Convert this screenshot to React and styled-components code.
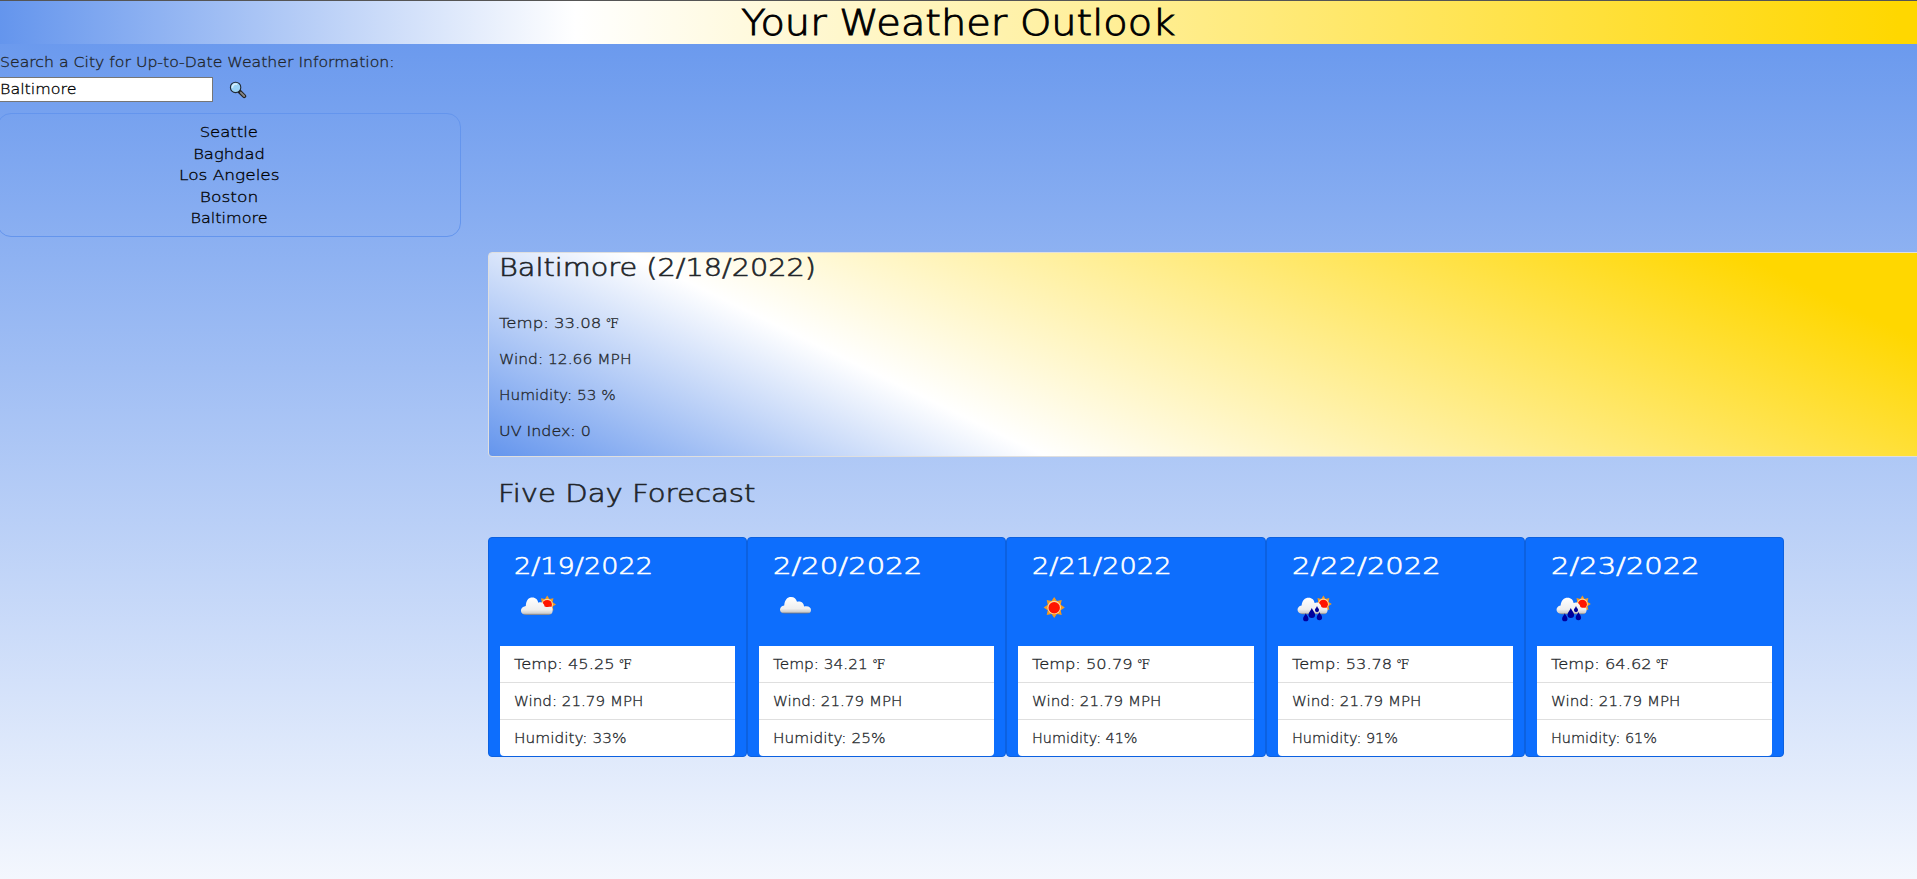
import React from "react";
import styled, { createGlobalStyle } from "styled-components";

const GlobalStyle = createGlobalStyle`
  *, *::before, *::after { box-sizing: border-box; }
  html, body { margin: 0; height: 879px; overflow: hidden; }
  body {
    background: linear-gradient(to bottom, cornflowerblue, white 950px);
    color: #212529;
    font-family: "DejaVu Sans Light", "DejaVu Sans", sans-serif;
    font-weight: 200;
    font-size: 14.6px;
    line-height: 24px;
  }
`;

const Label = styled.span`
  display: inline-block;
  white-space: pre;
  transform: scaleX(${(p) => p.$stretch || 1});
  transform-origin: ${(p) => (p.$centered ? "center" : "left")};
  -webkit-text-stroke: ${(p) => p.$stroke ?? 0.3}px currentColor;
`;

const Degree = styled.span`
  font-family: "DejaVu Serif Condensed", "DejaVu Serif", serif;
  font-weight: 400;
  font-size: 13px;
  line-height: 1;
  margin-left: ${(p) => p.$gap}px;
`;

const Page = styled.div`
  width: 100%;
  height: 879px;
  overflow: hidden;
`;

const Header = styled.header`
  height: 44px;
  border-top: 1px solid #555;
  background: linear-gradient(to right, cornflowerblue, white 30%, gold 99%);
  display: flex;
  justify-content: center;
`;

const Title = styled.h1`
  margin: 0;
  font-size: 35px;
  font-weight: 200;
  line-height: 44px;
  color: #000;
`;

const SearchPanel = styled.section`
  width: 464px;
  margin-left: -3px;
  height: 208px;
  padding-top: 6px;
`;

const SearchLabel = styled.label`
  display: block;
  height: 27px;
  line-height: 24px;
  padding-left: 3px;
`;

const SearchRow = styled.div`
  display: flex;
  align-items: center;
  gap: 16px;
`;

const SearchBox = styled.div`
  width: 216px;
  height: 25px;
  border: 1px solid #767676;
  background: #fff;
  color: #000;
  line-height: 22px;
  padding-left: 2px;
`;

const History = styled.ul`
  list-style: none;
  margin: 11px 0 0;
  padding: 7px 0 8px;
  height: 124px;
  border: 1px solid #6495ed;
  border-radius: 14px;
  text-align: center;
  color: #000;
`;

const HistoryItem = styled.li`
  height: 21.5px;
  line-height: 22px;
`;

const Results = styled.main`
  width: 1438px;
  margin-left: 488px;
`;

const Today = styled.section`
  height: 205px;
  border: 1px solid #dfdfdf;
  border-radius: 4px;
  padding: 0 10px;
  background: linear-gradient(26deg, cornflowerblue, white 30%, gold 90%);
`;

const Heading = styled.h2`
  margin: 0;
  font-size: 24.3px;
  font-weight: 200;
  line-height: 30px;
`;

const Metrics = styled.div`
  padding-top: 22px;
`;

const Metric = styled.div`
  height: 36px;
  line-height: 36px;
`;

const ForecastTitle = styled.div`
  height: 80px;
  padding: 22px 0 0 10px;
`;

const Days = styled.section`
  display: flex;
  width: 1296px;
`;

const DayCard = styled.article`
  flex: 1 1 0;
  min-width: 0;
  height: 220px;
  border: 1px solid #0c61e0;
  border-radius: 4px;
  background: #0d6efd;
  padding: 0 11px;
`;

const DayHead = styled.div`
  height: 108px;
  padding: 13px 0 0 14px;
`;

const DayDate = styled.h5`
  margin: 0;
  font-size: 22.4px;
  font-weight: 200;
  line-height: 30px;
  color: #fff;
`;

const WeatherIcon = styled.svg`
  display: block;
  width: 50px;
  height: 50px;
  margin-top: 1px;
`;

const DayList = styled.ul`
  list-style: none;
  margin: 0;
  padding: 0;
  background: #fff;
  border-radius: 0 0 4px 4px;
`;

const DayRow = styled.li`
  height: ${(p) => (p.$last ? 36 : 37)}px;
  line-height: 35px;
  padding-left: 14px;
  border-bottom: ${(p) => (p.$last ? "none" : "1px solid #dfdfdf")};
`;

function Magnifier() {
  return (
    <svg width="18" height="18" viewBox="0 0 18 18">
      <path d="M10.5 10.5 L15.2 15.2" stroke="#222" strokeWidth="4" strokeLinecap="round" />
      <path d="M11.8 11.6 L15.2 15" stroke="#858585" strokeWidth="1.9" strokeLinecap="round" />
      <circle cx="6.6" cy="6.4" r="5.2" fill="#9bd3f5" stroke="#222b35" strokeWidth="1.1" />
      <path d="M3.4 6.8 A3.4 3.4 0 0 1 8.2 3.4" stroke="#d9f0fc" strokeWidth="1.6" fill="none" />
    </svg>
  );
}

function sunRays(cx, cy, outer, inner) {
  const points = [];
  for (let i = 0; i < 16; i++) {
    const r = i % 2 ? inner : outer;
    const a = (Math.PI * i) / 8 - Math.PI / 2;
    points.push(`${(cx + r * Math.cos(a)).toFixed(2)},${(cy + r * Math.sin(a)).toFixed(2)}`);
  }
  return points.join(" ");
}

function Sun({ cx, cy, r }) {
  return (
    <g>
      <polygon points={sunRays(cx, cy, r, r * 0.66)} fill="#f59a1c" />
      <circle cx={cx} cy={cy} r={r * 0.64} fill="#ffd9a0" />
      <circle cx={cx} cy={cy + 0.3} r={r * 0.54} fill="#ff1500" />
    </g>
  );
}

function Drop({ x, y, s }) {
  return (
    <path
      transform={`translate(${x} ${y}) scale(${s})`}
      d="M0 -4.5 C0.8 -2 3 -0.6 3 1.6 A3 3 0 0 1 -3 1.6 C-3 -0.6 -0.8 -2 0 -4.5 Z"
      fill="#00009c"
    />
  );
}

function ConditionIcon({ kind }) {
  return (
    <WeatherIcon viewBox="0 0 50 50">
      <defs>
        <linearGradient id={`cloud-${kind}`} x1="0" y1="0" x2="0" y2="1">
          <stop offset="0" stopColor="#fff" />
          <stop offset="0.7" stopColor="#efefef" />
          <stop offset="0.9" stopColor="#cfcfcf" />
          <stop offset="1" stopColor="#6f7480" />
        </linearGradient>
      </defs>
      {kind === "sun" && <Sun cx={22.2} cy={25.5} r={10.6} />}
      {kind === "partly" && (
        <>
          <Sun cx={33.2} cy={22.4} r={8.8} />
          <path
            d="M12.5 33 C5.5 33 5 25 11.8 24 C12 18 14.8 15.5 18.3 15.5 C21.8 15.5 23.8 17.8 24.3 20.8 C27.4 19.4 30.2 21.4 30.6 24.4 C34 25.6 36 24.4 38 25 C39.5 29 38.5 33 34.5 33 Z"
            fill={`url(#cloud-${kind})`}
          />
        </>
      )}
      {kind === "cloud" && (
        <path
          d="M12 31.5 C5.5 31.5 5.5 24.2 11.2 23.4 C11.8 17.5 14.5 15 18 15 C21.4 15 23 17 24 19.8 C28 18.6 31 21 31 24.6 C36 23.6 38 26 38 28 C38 30.5 36.5 31.5 34.5 31.5 Z"
          fill={`url(#cloud-${kind})`}
        />
      )}
      {kind === "rain" && (
        <>
          <Sun cx={31.4} cy={22} r={8.4} />
          <path
            d="M11 32.3 C4 32 4 24.5 9.6 23.6 C10 18.4 13 15.8 16.6 15.8 C20.2 15.8 22.2 18.2 22.6 21 C25.6 19.4 29 21.4 29.4 25 C32 26.5 34 25 35.5 26.5 C36 30 34.6 32.3 31 32.3 Z"
            fill={`url(#cloud-${kind})`}
          />
          <Drop x={13.8} y={35.2} s={0.9} />
          <Drop x={19.8} y={31} s={1.1} />
          <Drop x={25} y={27} s={0.68} />
          <Drop x={27.4} y={34} s={0.9} />
        </>
      )}
    </WeatherIcon>
  );
}

const history = [
  ["Seattle", 1.13],
  ["Baghdad", 1.12],
  ["Los Angeles", 1.16],
  ["Boston", 1.17],
  ["Baltimore", 1.1],
];

const days = [
  { date: "2/19/2022", dateStretch: 1.21, icon: "partly", temp: "45.25", tempStretch: 1.115, gap: 15, hum: "33%", humStretch: 1.05 },
  { date: "2/20/2022", dateStretch: 1.3, icon: "cloud", temp: "34.21", tempStretch: 1.05, gap: 9.2, hum: "25%", humStretch: 1.05 },
  { date: "2/21/2022", dateStretch: 1.215, icon: "sun", temp: "50.79", tempStretch: 1.115, gap: 14.8, hum: "41%", humStretch: 0.985 },
  { date: "2/22/2022", dateStretch: 1.295, icon: "rain", temp: "53.78", tempStretch: 1.11, gap: 14.8, hum: "91%", humStretch: 0.99 },
  { date: "2/23/2022", dateStretch: 1.295, icon: "rain", temp: "64.62", tempStretch: 1.115, gap: 15, hum: "61%", humStretch: 0.99 },
];

export default function App() {
  return (
    <Page>
      <GlobalStyle />
      <Header>
        <Title><Label $centered $stretch={1.14} $stroke={0.9}>Your Weather Outlook</Label></Title>
      </Header>
      <SearchPanel>
        <SearchLabel>
          <Label $stretch={1.076}>Search a City for Up-to-Date Weather Information:</Label>
        </SearchLabel>
        <SearchRow>
          <SearchBox><Label $stretch={1.09}>Baltimore</Label></SearchBox>
          <Magnifier />
        </SearchRow>
        <History>
          {history.map(([city, stretch]) => (
            <HistoryItem key={city}><Label $centered $stretch={stretch}>{city}</Label></HistoryItem>
          ))}
        </History>
      </SearchPanel>
      <Results>
        <Today>
          <Heading><Label $stretch={1.183} $stroke={0.6}>Baltimore (2/18/2022)</Label></Heading>
          <Metrics>
            <Metric><Label $stretch={1.135}>Temp: 33.08</Label><Degree $gap={17}>℉</Degree></Metric>
            <Metric><Label $stretch={1.06}>Wind: 12.66 MPH</Label></Metric>
            <Metric><Label $stretch={1.045}>Humidity: 53 %</Label></Metric>
            <Metric><Label $stretch={1.09}>UV Index: 0</Label></Metric>
          </Metrics>
        </Today>
        <ForecastTitle>
          <Heading><Label $stretch={1.2} $stroke={0.6}>Five Day Forecast</Label></Heading>
        </ForecastTitle>
        <Days>
          {days.map((d) => (
            <DayCard key={d.date}>
              <DayHead>
                <DayDate><Label $stretch={d.dateStretch} $stroke={0.6}>{d.date}</Label></DayDate>
                <ConditionIcon kind={d.icon} />
              </DayHead>
              <DayList>
                <DayRow><Label $stretch={d.tempStretch}>{`Temp: ${d.temp}`}</Label><Degree $gap={d.gap}>℉</Degree></DayRow>
                <DayRow><Label $stretch={1.035}>Wind: 21.79 MPH</Label></DayRow>
                <DayRow $last><Label $stretch={d.humStretch}>{`Humidity: ${d.hum}`}</Label></DayRow>
              </DayList>
            </DayCard>
          ))}
        </Days>
      </Results>
    </Page>
  );
}
